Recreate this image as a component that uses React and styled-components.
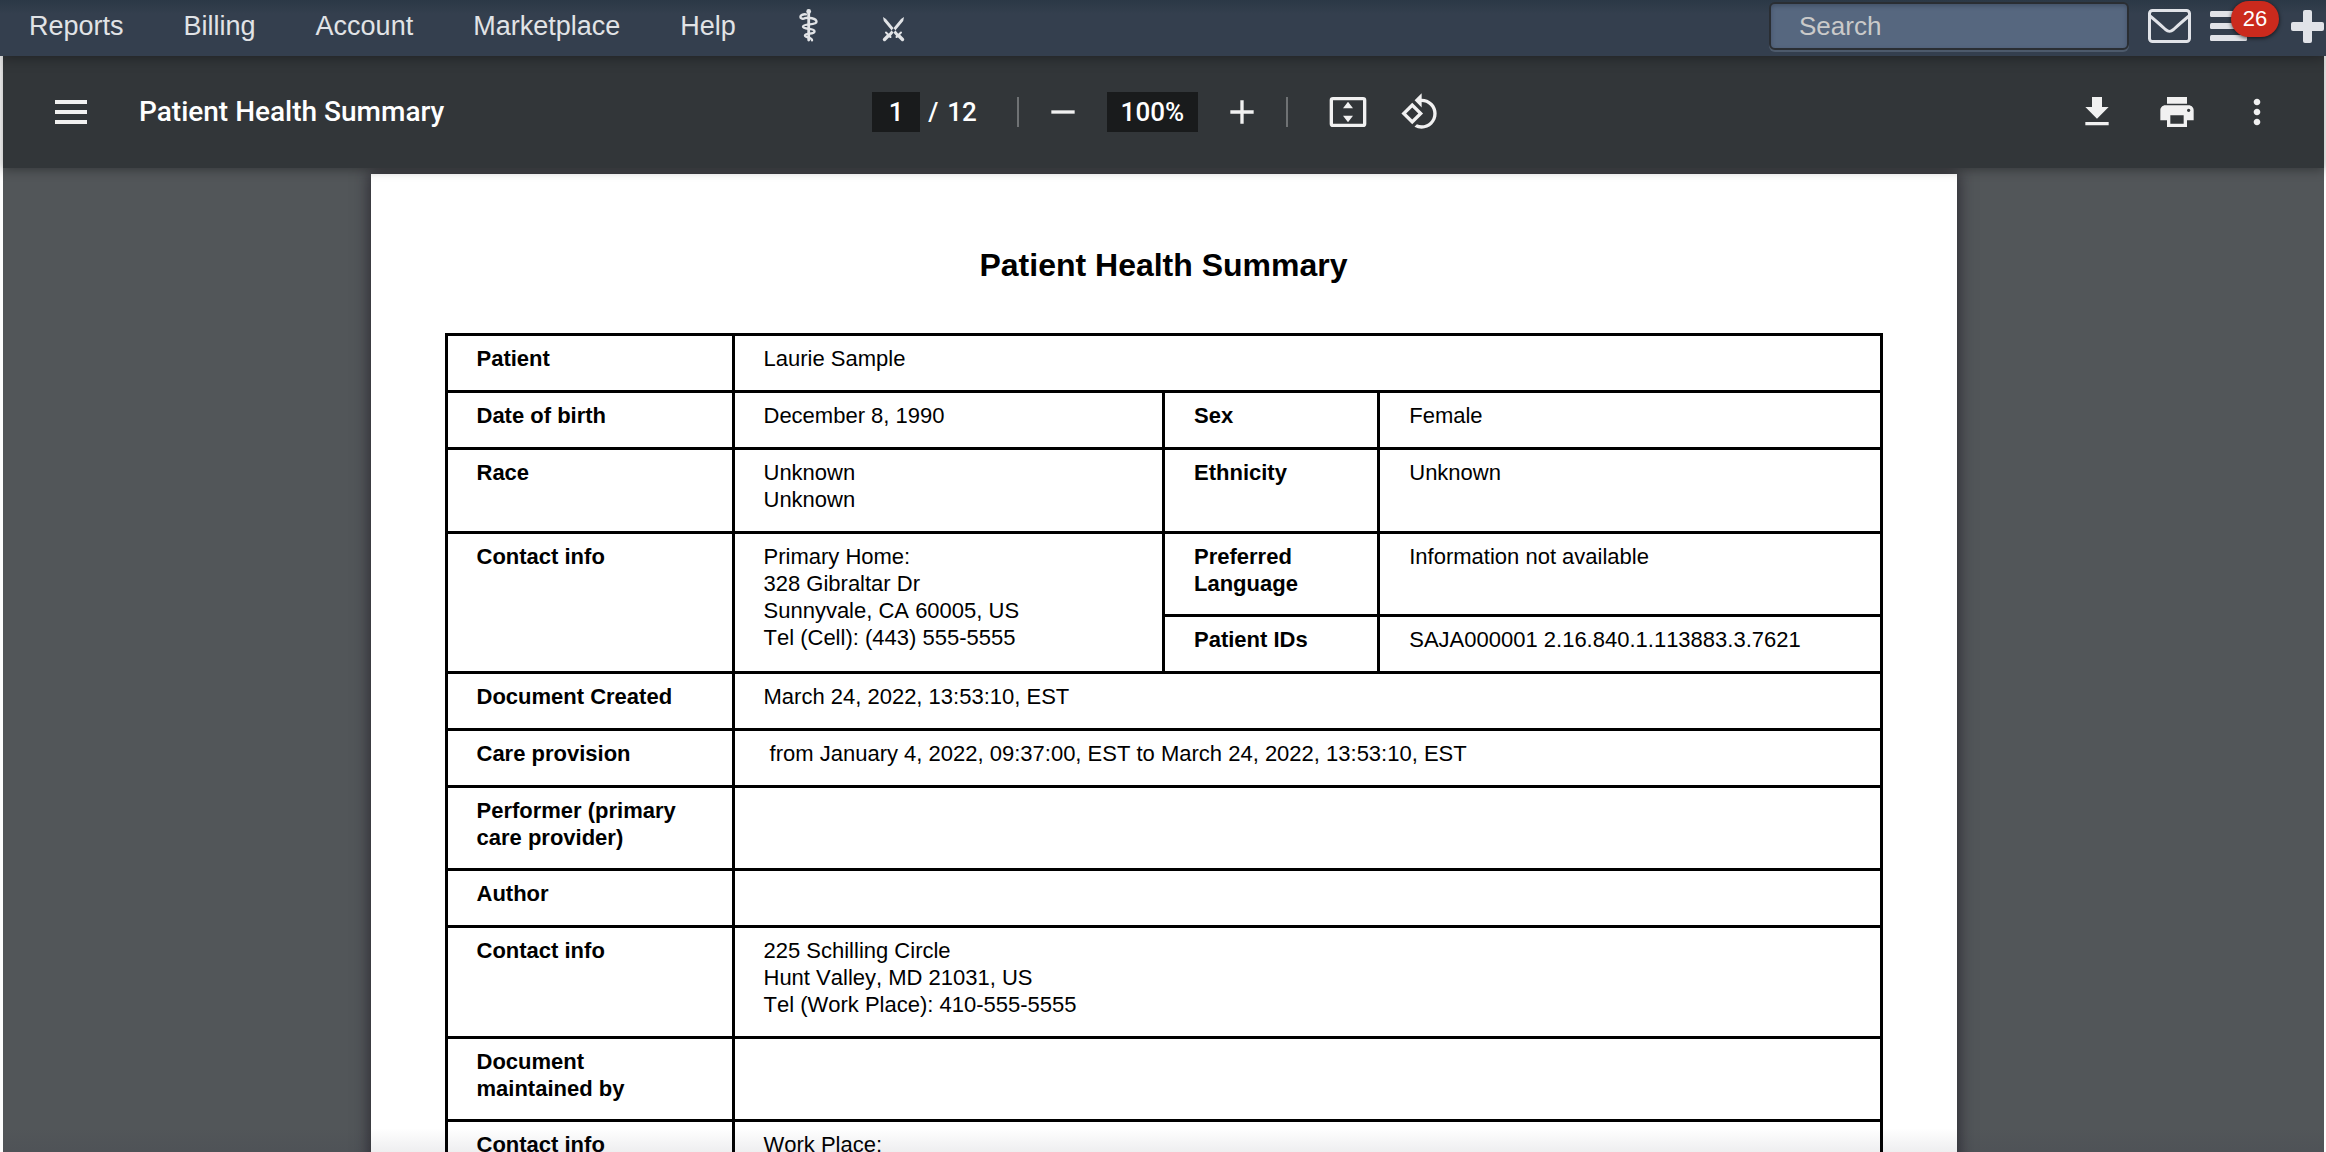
import styled, { createGlobalStyle } from "styled-components";

const GlobalStyle = createGlobalStyle`
  * {
    box-sizing: border-box;
  }

  body {
    margin: 0;
    background: #fdfdfd;
    font-family: "Liberation Sans", Arial, sans-serif;
  }
`;

const Screen = styled.div`
  display: flex;
  flex-direction: column;
  height: 100vh;
  overflow: hidden;
`;

const TopBar = styled.header`
  display: flex;
  align-items: center;
  height: 56px;
  flex-shrink: 0;
  padding: 0 2px 4px 29px;
  background: linear-gradient(#2b3846, #343f4e 14px);
  position: relative;
  z-index: 3;
  box-shadow: 0 0 14px rgba(0, 0, 0, 0.45);
`;

const Menu = styled.nav`
  display: flex;
  align-items: center;
  gap: 60px;
`;

const MenuLink = styled.a`
  display: flex;
  color: #e1e3e6;
  font-size: 27px;
  line-height: 32px;
  text-decoration: none;
`;

const TopActions = styled.div`
  display: flex;
  align-items: center;
  gap: 19px;
  margin-left: auto;
`;

const SearchInput = styled.input`
  width: 360px;
  height: 48px;
  padding: 0 28px;
  border: 2px solid #2a2e33;
  border-radius: 6px;
  background: #56677f;
  box-shadow: 0 2px 0 #4d5a6b, inset 0 2px 4px rgba(30, 40, 60, 0.35);
  color: #fff;
  font-family: inherit;
  font-size: 26px;

  &::placeholder {
    color: #cacaca;
    opacity: 1;
  }
`;

const TopButton = styled.button`
  display: flex;
  position: relative;
  padding: 0;
  border: 0;
  background: none;
  color: #e1e3e8;
  margin-right: ${(props) => (props.$spaced ? "25px" : "0")};
`;

const Badge = styled.span`
  position: absolute;
  top: -10px;
  left: 21px;
  width: 48px;
  height: 36px;
  border-radius: 18px;
  background: #cb2a1d;
  box-shadow: 0 1px 4px rgba(0, 0, 0, 0.7);
  color: #fff;
  font-family: "Liberation Sans", Arial, sans-serif;
  font-size: 22px;
  line-height: 36px;
  text-align: center;
`;

const Viewer = styled.main`
  display: flex;
  flex-direction: column;
  flex: 1;
  min-height: 0;
  margin: 0 2px 0 3px;
  background: #525659;
  position: relative;

  &::after {
    content: "";
    position: absolute;
    inset: auto 0 0 0;
    height: 24px;
    background: linear-gradient(rgba(40, 40, 60, 0), rgba(40, 40, 60, 0.08));
    pointer-events: none;
  }
`;

const Toolbar = styled.div`
  display: grid;
  grid-template-columns: 1fr auto 1fr;
  align-items: center;
  height: 112px;
  flex-shrink: 0;
  padding: 0 35px 0 36px;
  background: #323639;
  color: #fff;
  font-family: Roboto, sans-serif;
  position: relative;
  z-index: 2;
  box-shadow: 0 2px 10px rgba(0, 0, 0, 0.35);
`;

const ToolGroup = styled.div`
  display: flex;
  align-items: center;
  justify-content: ${(props) => props.$align || "flex-start"};
  gap: ${(props) => props.$gap}px;
`;

const ViewTools = styled(ToolGroup)`
  margin: 0 4px 0 16px;
`;

const FileName = styled.span`
  margin-left: 36px;
  font-size: 28px;
  font-weight: 500;
  line-height: 40px;
`;

const ToolButton = styled.button`
  display: flex;
  align-items: center;
  justify-content: center;
  width: 64px;
  height: 64px;
  padding: 0;
  border: 0;
  border-radius: 50%;
  background: none;
  color: #f1f1f1;
`;

const ToolInput = styled.input`
  width: ${(props) => props.$width}px;
  height: 40px;
  padding: 0;
  border: 0;
  background: #191b1c;
  color: #fff;
  font-family: inherit;
  font-size: 26px;
  font-weight: 500;
  text-align: center;
`;

const PageTotal = styled.span`
  display: flex;
  gap: 9px;
  margin: 0 28px 0 -4px;
  font-size: 26px;
  font-weight: 500;
  line-height: 40px;
`;

const Divider = styled.span`
  width: 2px;
  height: 30px;
  background: #6f7274;
`;

const PageArea = styled.div`
  flex: 1;
  min-height: 0;
  padding-top: 6px;
  overflow: hidden;
`;

const Page = styled.article`
  width: 100%;
  max-width: 1586px;
  min-height: 100%;
  margin: 0 auto;
  padding: 73px 74px 0;
  background: #fff;
  box-shadow: 0 0 14px 2px rgba(30, 25, 35, 0.7);
  color: #000;
  font-kerning: none;
`;

const PageTitle = styled.h1`
  margin: 0 0 50px;
  font-size: 32px;
  line-height: 36px;
  text-align: center;
`;

const SummaryTable = styled.table`
  width: 100%;
  table-layout: fixed;
  border-collapse: collapse;
  font-size: 22px;
  line-height: 27px;
`;

const Label = styled.th`
  padding: 9px 28px 17px 29px;
  border: 3px solid #000;
  text-align: left;
  vertical-align: top;
`;

const Value = styled.td`
  padding: 9px 28px 18px 29px;
  border: 3px solid #000;
  vertical-align: top;
  white-space: pre-line;
`;

const SummaryRow = styled.tr`
  height: 57px;
`;

const StaffIcon = () => (
  <svg width="25" height="34" viewBox="1.5 1 25 34" fill="none" stroke="currentColor" strokeLinecap="round">
    <circle cx="14.2" cy="3.4" r="2.4" fill="currentColor" stroke="none" />
    <path d="M14.2 3v29" strokeWidth="2.8" />
    <path
      d="M10.5 10.2c-2 1-4.6.6-4.6-1.2 0-2 2.6-3 5.6-2.6M10.5 10.2c3-1.2 11.5.2 11.5 3.6 0 4-13.5 1.2-13.5 4.8 0 3.4 11.5 1.2 11.5 4.8 0 3.2-9.5 1.4-9.5 4 0 2.4 7 1.4 7 4.8"
      strokeWidth="2.4"
    />
  </svg>
);

const SwordsIcon = () => (
  <svg width="25" height="34" viewBox="1.5 1 25 34" fill="none" stroke="currentColor">
    <path
      d="M3.5 9l.8 4L18 29.5l2.2-2L6.5 11zM24.5 9l-.8 4L10 29.5l-2.2-2L21.5 11z"
      fill="currentColor"
      stroke="none"
    />
    <path d="M19 27.5l4 4M9 27.5l-4 4" strokeWidth="3.4" strokeLinecap="round" />
    <path d="M17 29l4.500-4.500M11 29l-4.500-4.500" strokeWidth="2" strokeLinecap="round" />
  </svg>
);

const MailIcon = () => (
  <svg width="43" height="34" viewBox="0 0 43 34" fill="none" stroke="currentColor" strokeWidth="3">
    <rect x="1.5" y="1.5" width="40" height="31" rx="3" />
    <path d="M2 7c5 4 10 8.5 15.5 13.5 3 2.6 5 2.6 8 0C31 15.5 36 11 41 7" />
  </svg>
);

const ListIcon = () => (
  <svg width="37" height="30" viewBox="0 0 37 30" fill="currentColor">
    <rect width="37" height="6" rx="1.5" />
    <rect y="12" width="37" height="6" rx="1.5" />
    <rect y="24" width="37" height="6" rx="1.5" />
  </svg>
);

const AddIcon = () => (
  <svg width="33" height="33" viewBox="0 0 33 33" fill="currentColor">
    <rect x="12" width="9" height="33" rx="2" />
    <rect y="12" width="33" height="9" rx="2" />
  </svg>
);

const SidebarIcon = () => (
  <svg width="32" height="24" viewBox="0 0 32 24" fill="currentColor">
    <path d="M0 0h32v4H0zM0 10h32v4H0zM0 20h32v4H0z" />
  </svg>
);

// toolbar icons share one 24 unit grid
const toolPaths = {
  zoomOut: "M5 11h14v2H5z",
  zoomIn: "M19 13h-6v6h-2v-6H5v-2h6V5h2v6h6z",
  fit: "M3 3h18a2 2 0 0 1 2 2v14a2 2 0 0 1-2 2H3a2 2 0 0 1-2-2V5a2 2 0 0 1 2-2zm0 2v14h18V5zM12 5.8l3 4H9zM12 18.2l-3-4h6z",
  rotate:
    "M7.34 6.41L.86 12.9l6.49 6.48 6.49-6.48-6.5-6.49zM3.69 12.9l3.66-3.66L11 12.9l-3.66 3.66-3.65-3.66zm15.67-6.26C17.61 4.88 15.3 4 13 4V.76L8.76 5 13 9.24V6c1.79 0 3.58.68 4.95 2.05 2.73 2.73 2.73 7.17 0 9.9C16.58 19.32 14.79 20 13 20c-.97 0-1.94-.21-2.84-.61l-1.49 1.49C10.02 21.62 11.51 22 13 22c2.3 0 4.61-.88 6.36-2.64 3.52-3.51 3.52-9.21 0-12.72z",
  download: "M19 9h-4V3H9v6H5l7 7 7-7zM5 18v2h14v-2H5z",
  print:
    "M19 8H5c-1.66 0-3 1.34-3 3v6h4v4h12v-4h4v-6c0-1.66-1.34-3-3-3zm-3 11H8v-5h8v5zm3-7c-.55 0-1-.45-1-1s.45-1 1-1 1 .45 1 1-.45 1-1 1zm-1-9H6v4h12V3z",
  more: "M12 8c1.1 0 2-.9 2-2s-.9-2-2-2-2 .9-2 2 .9 2 2 2zm0 2c-1.1 0-2 .9-2 2s.9 2 2 2 2-.9 2-2-.9-2-2-2zm0 6c-1.1 0-2 .9-2 2s.9 2 2 2 2-.9 2-2-.9-2-2-2z",
};

const Tool = (props) => (
  <ToolButton type="button" aria-label={props.label}>
    <svg width="40" height="40" viewBox="0 0 24 24" fill="currentColor" fillRule="evenodd">
      <path d={toolPaths[props.icon]} />
    </svg>
  </ToolButton>
);

const menuItems = ["Reports", "Billing", "Account", "Marketplace", "Help"];

const rows = [
  [{ label: "Patient" }, { value: "Laurie Sample", colSpan: 3 }],
  [{ label: "Date of birth" }, { value: "December 8, 1990" }, { label: "Sex" }, { value: "Female" }],
  [{ label: "Race" }, { value: "Unknown\nUnknown" }, { label: "Ethnicity" }, { value: "Unknown" }],
  [
    { label: "Contact info", rowSpan: 2 },
    {
      value: "Primary Home:\n328 Gibraltar Dr\nSunnyvale, CA 60005, US\nTel (Cell): (443) 555-5555",
      rowSpan: 2,
    },
    { label: "Preferred Language" },
    { value: "Information not available" },
  ],
  [{ label: "Patient IDs" }, { value: "SAJA000001 2.16.840.1.113883.3.7621" }],
  [{ label: "Document Created" }, { value: "March 24, 2022, 13:53:10, EST", colSpan: 3 }],
  [
    { label: "Care provision" },
    { value: "\u00a0from January 4, 2022, 09:37:00, EST to March 24, 2022, 13:53:10, EST", colSpan: 3 },
  ],
  [{ label: "Performer (primary care provider)" }, { value: "", colSpan: 3 }],
  [{ label: "Author" }, { value: "", colSpan: 3 }],
  [
    { label: "Contact info" },
    { value: "225 Schilling Circle\nHunt Valley, MD 21031, US\nTel (Work Place): 410-555-5555", colSpan: 3 },
  ],
  [{ label: "Document maintained by" }, { value: "", colSpan: 3 }],
  [{ label: "Contact info" }, { value: "Work Place:", colSpan: 3 }],
];

const App = () => {
  return (
    <Screen>
      <GlobalStyle />
      <TopBar>
        <Menu>
          {menuItems.map((item) => (
            <MenuLink href="#" key={item}>
              {item}
            </MenuLink>
          ))}
          <MenuLink href="#" aria-label="Clinical">
            <StaffIcon />
          </MenuLink>
          <MenuLink href="#" aria-label="Tools">
            <SwordsIcon />
          </MenuLink>
        </Menu>
        <TopActions>
          <SearchInput type="text" placeholder="Search" aria-label="Search" />
          <TopButton type="button" aria-label="Messages">
            <MailIcon />
          </TopButton>
          <TopButton type="button" aria-label="Tasks" $spaced>
            <ListIcon />
            <Badge>26</Badge>
          </TopButton>
          <TopButton type="button" aria-label="Add">
            <AddIcon />
          </TopButton>
        </TopActions>
      </TopBar>
      <Viewer>
        <Toolbar>
          <ToolGroup $gap={0}>
            <ToolButton type="button" aria-label="Menu">
              <SidebarIcon />
            </ToolButton>
            <FileName>Patient Health Summary</FileName>
          </ToolGroup>
          <ToolGroup $gap={12}>
            <ToolInput type="text" aria-label="Page number" defaultValue="1" $width={48} />
            <PageTotal>
              <span>/</span>
              <span>12</span>
            </PageTotal>
            <Divider />
            <Tool icon="zoomOut" label="Zoom out" />
            <ToolInput type="text" aria-label="Zoom level" defaultValue="100%" $width={91} />
            <Tool icon="zoomIn" label="Zoom in" />
            <Divider />
            <ViewTools $gap={8}>
              <Tool icon="fit" label="Fit to page" />
              <Tool icon="rotate" label="Rotate" />
            </ViewTools>
          </ToolGroup>
          <ToolGroup $gap={16} $align="flex-end">
            <Tool icon="download" label="Download" />
            <Tool icon="print" label="Print" />
            <Tool icon="more" label="More actions" />
          </ToolGroup>
        </Toolbar>
        <PageArea>
          <Page>
            <PageTitle>Patient Health Summary</PageTitle>
            <SummaryTable>
              <colgroup>
                <col width="20%" />
                <col width="30%" />
                <col width="15%" />
                <col width="35%" />
              </colgroup>
              <tbody>
                {rows.map((cells, rowIndex) => (
                  <SummaryRow key={rowIndex}>
                    {cells.map((cell, cellIndex) =>
                      cell.label ? (
                        <Label key={cellIndex} scope="row" rowSpan={cell.rowSpan}>
                          {cell.label}
                        </Label>
                      ) : (
                        <Value key={cellIndex} colSpan={cell.colSpan} rowSpan={cell.rowSpan}>
                          {cell.value}
                        </Value>
                      )
                    )}
                  </SummaryRow>
                ))}
              </tbody>
            </SummaryTable>
          </Page>
        </PageArea>
      </Viewer>
    </Screen>
  );
};

export default App;
